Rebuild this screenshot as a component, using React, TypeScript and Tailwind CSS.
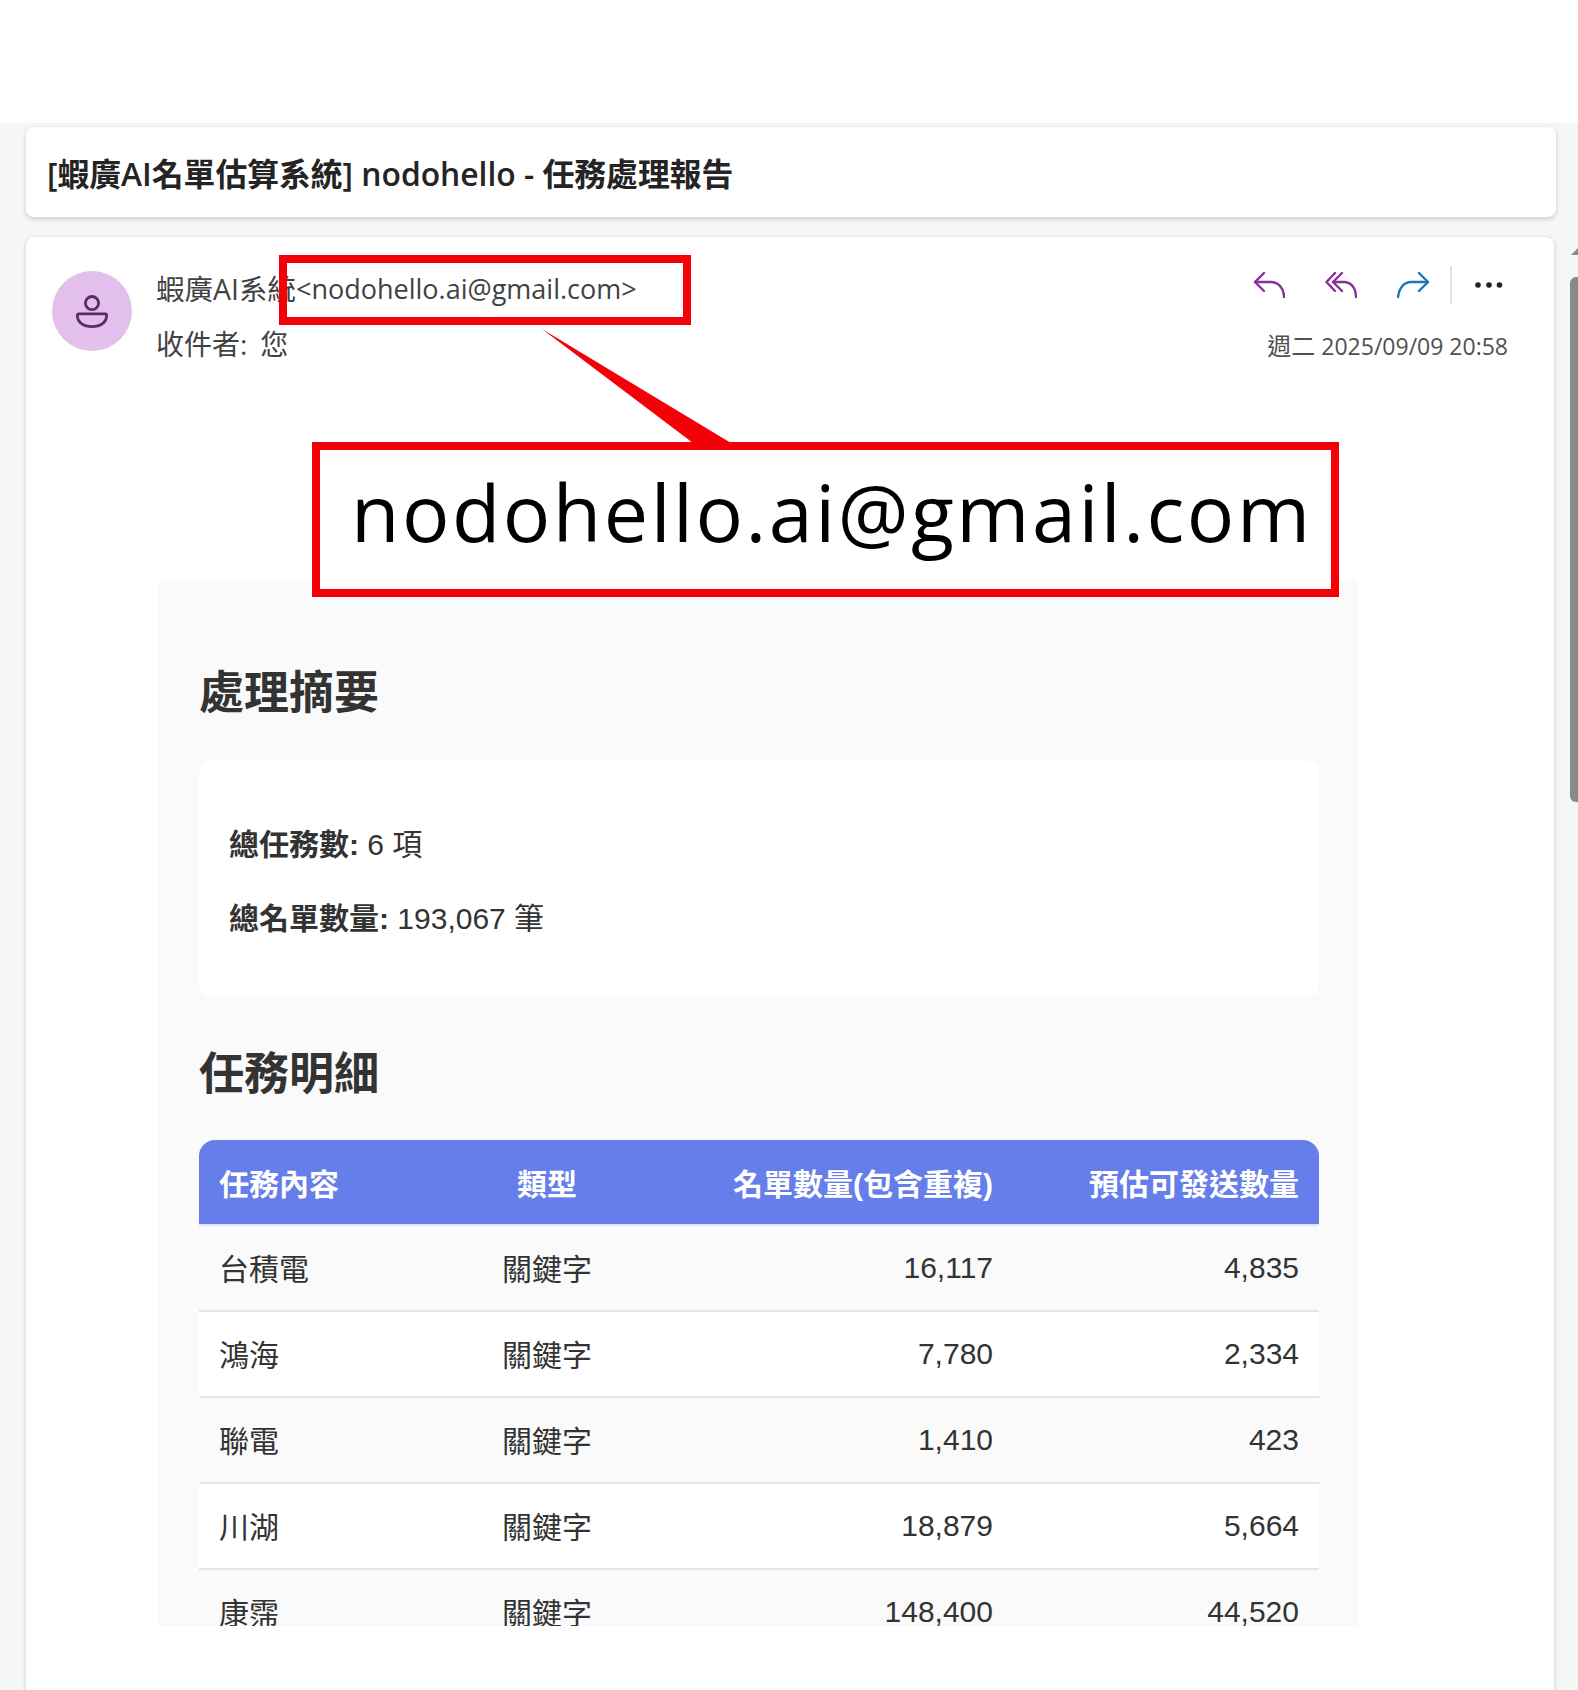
const bodyFont = "font-['Liberation_Sans','Noto_Sans_CJK_TC',sans-serif]";

function ReplyIcon() {
  return (
    <svg width="32" height="26" viewBox="0 0 32 26" fill="none" stroke="#8a2f9a" strokeWidth="2.4" strokeLinecap="round" strokeLinejoin="round">
      <path d="M11 1 L2 10 L11 19" />
      <path d="M2 10 H18 C25 10 31 16 31 25" />
    </svg>
  );
}
function ReplyAllIcon() {
  return (
    <svg width="32" height="26" viewBox="0 0 32 26" fill="none" stroke="#8a2f9a" strokeWidth="2.4" strokeLinecap="round" strokeLinejoin="round">
      <path d="M10 1 L1.5 10 L10 19" />
      <path d="M17 1 L8 10 L17 19" />
      <path d="M8 10 H19 C26 10 31 16 31 25" />
    </svg>
  );
}
function ForwardIcon() {
  return (
    <svg width="32" height="26" viewBox="0 0 32 26" fill="none" stroke="#1b78b8" strokeWidth="2.4" strokeLinecap="round" strokeLinejoin="round">
      <path d="M22 1 L31 10 L22 19" />
      <path d="M31 10 H14 C7 10 2 16 1 25" />
    </svg>
  );
}
function MoreIcon() {
  return (
    <svg width="28" height="8" viewBox="0 0 28 8" fill="#222">
      <circle cx="3" cy="4" r="2.8" />
      <circle cx="14" cy="4" r="2.8" />
      <circle cx="24.5" cy="4" r="2.8" />
    </svg>
  );
}
function PersonIcon() {
  return (
    <svg width="32" height="34" viewBox="0 0 34 36" fill="none" stroke="#5c2a6e" strokeWidth="3">
      <circle cx="17" cy="8.5" r="7" />
      <path d="M3 20 H31 Q32.5 20 32.5 22 C32.5 29 26 33.5 17 33.5 C8 33.5 1.5 29 1.5 22 Q1.5 20 3 20 Z" />
    </svg>
  );
}

const rows = [
  ["台積電", "關鍵字", "16,117", "4,835"],
  ["鴻海", "關鍵字", "7,780", "2,334"],
  ["聯電", "關鍵字", "1,410", "423"],
  ["川湖", "關鍵字", "18,879", "5,664"],
  ["康霈", "關鍵字", "148,400", "44,520"],
];

export default function App() {
  return (
    <div className="relative h-[1690px] w-[1578px] overflow-hidden bg-white">
      <div className="h-[123px] bg-white" />
      <div className="h-[1567px] bg-[#f6f6f6] pl-[26px] pt-[4px]">
        <div className="flex h-[90px] w-[1530px] items-center rounded-lg bg-white pl-[21px] shadow-[0_2px_5px_rgba(0,0,0,0.18)]">
          <h1 className="pt-[3px] font-['Open_Sans','Noto_Sans_CJK_TC',sans-serif] text-[31.8px] font-semibold text-[#242424]">
            [蝦廣AI名單估算系統] nodohello - 任務處理報告
          </h1>
        </div>

        <div className="mt-[20px] h-[1460px] w-[1528px] rounded-t-lg bg-white shadow-[0_1px_4px_rgba(0,0,0,0.18)]">
          <div className="flex h-[343px] items-start pl-[26px] pr-[46px] pt-[34px]">
            <div className="flex h-[80px] w-[80px] items-center justify-center rounded-full bg-[#e3bfeb] pt-[1px]">
              <PersonIcon />
            </div>
            <div className="ml-[24px] font-['Open_Sans','Noto_Sans_CJK_TC',sans-serif] text-[27px] text-[#424242]">
              <div className="flex h-[36px] items-center">
                <span className="text-[28.5px]">蝦廣AI系統</span>
                <span>&lt;nodohello.ai@gmail.com&gt;</span>
              </div>
              <div className="mt-[19px] flex h-[36px] items-center gap-[13px] text-[28px]">
                <span>收件者:</span>
                <span>您</span>
              </div>
            </div>
            <div className="ml-auto flex flex-col items-end">
              <div className="flex h-[40px] items-center pb-[12px] pr-[5px]">
                <ReplyIcon />
                <div className="ml-[40px]"><ReplyAllIcon /></div>
                <div className="ml-[40px]"><ForwardIcon /></div>
                <div className="ml-[21px] h-[38px] w-[2px] bg-[#e0e0e0]" />
                <div className="ml-[23px]"><MoreIcon /></div>
              </div>
              <div className="mt-[17px] font-['Open_Sans','Noto_Sans_CJK_TC',sans-serif] text-[23px] leading-[36px] text-[#505050]">
                <span className="text-[24px]">週二</span> 2025/09/09 20:58
              </div>
            </div>
          </div>

          <div className={`ml-[132px] h-[1046px] w-[1201px] overflow-hidden rounded-t-lg bg-[#fafafa] px-[41px] pt-[86px] ${bodyFont}`}>
            <h2 className="h-[56px] text-[45px] font-bold leading-[56px] text-[#333]">處理摘要</h2>
            <div className="mt-[39px] h-[236px] w-[1120px] rounded-xl bg-white px-[30px] pt-[65px] text-[30px] leading-[38px] text-[#333]">
              <p><strong>總任務數:</strong> 6 項</p>
              <p className="mt-[36px]"><strong>總名單數量:</strong> 193,067 筆</p>
            </div>
            <h2 className="mt-[50px] h-[56px] text-[45px] font-bold leading-[56px] text-[#333]">任務明細</h2>
            <div className="mt-[37px] w-[1120px] overflow-hidden rounded-t-2xl">
              <table className="w-[1120px] table-fixed border-collapse text-[30px] text-[#333]">
                <colgroup>
                  <col className="w-[258px]" />
                  <col className="w-[180px]" />
                  <col className="w-[376px]" />
                  <col className="w-[306px]" />
                </colgroup>
                <thead>
                  <tr className="h-[85px] border-b-2 border-[#dfe4f8] bg-[#667eea] text-white">
                    <th className="px-[20px] pt-[4px] text-left font-bold">任務內容</th>
                    <th className="px-[20px] pt-[4px] text-center font-bold">類型</th>
                    <th className="whitespace-nowrap px-[20px] pt-[4px] text-right font-bold">名單數量(包含重複)</th>
                    <th className="whitespace-nowrap px-[20px] pt-[4px] text-right font-bold">預估可發送數量</th>
                  </tr>
                </thead>
                <tbody>
                  {rows.map((r, i) => (
                    <tr key={r[0]} className={`h-[86px] border-b-2 border-[#e4e4e4] ${i % 2 === 1 ? "bg-white" : "bg-[#fafafa]"}`}>
                      <td className="px-[20px] pt-[2px] text-left">{r[0]}</td>
                      <td className="px-[20px] pt-[2px] text-center">{r[1]}</td>
                      <td className="px-[20px] pb-[2px] text-right">{r[2]}</td>
                      <td className="px-[20px] pb-[2px] text-right">{r[3]}</td>
                    </tr>
                  ))}
                </tbody>
              </table>
            </div>
          </div>
        </div>
      </div>

      {/* Scrollbar overlay */}
      <div className="absolute left-[1571px] top-[248px] h-0 w-0 border-x-[7px] border-b-[7px] border-x-transparent border-b-[#8a8a8a]" />
      <div className="absolute left-[1570px] top-[277px] h-[525px] w-[10px] rounded-l-md bg-[#8a8a8a]" />

      {/* Red annotation overlays */}
      <div className="absolute left-[279px] top-[255px] h-[70px] w-[412px] border-[8px] border-[#f40009]" />
      <svg className="absolute left-[541px] top-[326px]" width="200" height="120" viewBox="0 0 200 120">
        <polygon points="1,3 152,117 190,117" fill="#f40009" />
      </svg>
      <div className="absolute left-[312px] top-[442px] flex h-[155px] w-[1027px] items-center border-[8px] border-[#f40009] bg-white pl-[31px] font-['Open_Sans',sans-serif] text-[79px] font-medium tracking-[2.5px] text-black">
        <span className="pb-[15px]">nodohello.ai@gmail.com</span>
      </div>
    </div>
  );
}
